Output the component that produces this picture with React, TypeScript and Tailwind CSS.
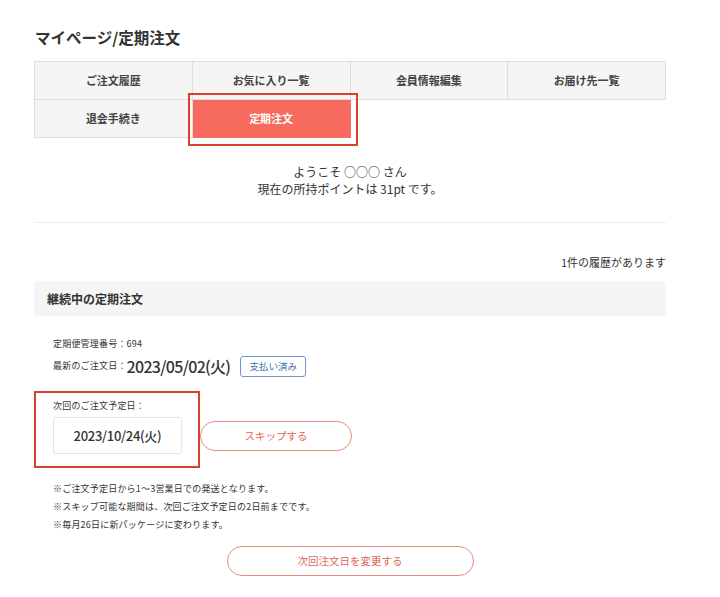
import * as React from 'react';

// Account navigation tabs, laid out 4 per row
const tabs = [
  { label: 'ご注文履歴' },
  { label: 'お気に入り一覧' },
  { label: '会員情報編集' },
  { label: 'お届け先一覧' },
  { label: '退会手続き' },
  { label: '定期注文', active: true },
];

const notes = [
  '※ご注文予定日から1〜3営業日での発送となります。',
  '※スキップ可能な期間は、次回ご注文予定日の2日前までです。',
  '※毎月26日に新パッケージに変わります。',
];

function NavTabs() {
  return (
    <div className="relative mt-[14px] grid grid-cols-4 border-l border-t border-[#dedede]">
      {tabs.map((tab) =>
        tab.active ? (
          <div
            key={tab.label}
            className="flex h-[38px] items-center justify-center border-b border-r border-[#f66b5d] bg-[#f66b5d] text-[11px] font-bold text-white"
          >
            {tab.label}
          </div>
        ) : (
          <div
            key={tab.label}
            className="flex h-[38px] items-center justify-center border-b border-r border-[#dedede] bg-[#f5f5f5] text-[11px] font-bold text-[#444]"
          >
            {tab.label}
          </div>
        )
      )}
      {/* highlight frame round the active tab */}
      <div className="pointer-events-none absolute left-[153px] top-[31px] h-[53px] w-[170px] border-2 border-[#d5432f]" />
    </div>
  );
}

export default function App() {
  return (
    <div className="h-[597px] w-[720px] overflow-hidden bg-white font-['Noto_Sans_CJK_JP',sans-serif] text-[#333]">
      <div className="ml-[34px] w-[632px] pt-[27px]">
        <h1 className="ml-px text-[15.5px] font-bold leading-[20px] text-[#333]">マイページ/定期注文</h1>

        <NavTabs />

        <div className="mt-[25px] text-center text-[12px] leading-[17px]">
          <p>ようこそ ○○○ さん</p>
          <p>現在の所持ポイントは 31pt です。</p>
        </div>

        <hr className="mt-[25px] border-t border-[#ececec]" />

        <p className="mt-[31px] text-right text-[11px] leading-[16px]">1件の履歴があります</p>

        <div className="mt-[11px] flex h-[35px] items-center rounded-sm bg-[#f5f5f5] pl-[13px]">
          <h2 className="text-[12px] font-bold">継続中の定期注文</h2>
        </div>

        <div className="pl-[19px]">
          <p className="mt-[21px] text-[9px] leading-[14px] tracking-[0.2px]">定期便管理番号：694</p>

          <div className="mt-[4px] flex items-center">
            <span className="text-[9px] tracking-[0.2px]">最新のご注文日：</span>
            <span className="text-[16px] font-medium leading-[22px] tracking-[-0.7px]">2023/05/02(火)</span>
            <span className="ml-[10px] flex h-[21px] w-[66px] items-center justify-center rounded-[3px] border border-[#6b98c8] text-[9.5px] text-[#3d74b0]">
              支払い済み
            </span>
          </div>

          <div className="relative mt-[14px] flex items-center">
            <div className="pt-[8px]">
              <p className="text-[9px] leading-[14px] tracking-[0.2px]">次回のご注文予定日：</p>
              <div className="mt-[4px] flex h-[37px] w-[129px] items-center justify-center rounded-[3px] border border-[#e6e6e6] bg-white text-[13px] font-medium tracking-[-0.3px] shadow-[0_0_2px_rgba(0,0,0,0.06)]">
                2023/10/24(火)
              </div>
            </div>
            <button className="ml-[18px] mt-[27px] flex h-[30px] w-[152px] items-center justify-center rounded-full border border-[#e98a82] text-[10.5px] text-[#e0665c]">
              スキップする
            </button>
            {/* highlight frame round the next order date */}
            <div className="pointer-events-none absolute left-[-19px] top-0 h-[77px] w-[166px] border-2 border-[#d5432f]" />
          </div>

          <div className="mt-[26px] text-[9px] leading-[18px] tracking-[0.2px]">
            {notes.map((n) => (
              <p key={n}>{n}</p>
            ))}
          </div>
        </div>

        <div className="mt-[12px] flex justify-center">
          <button className="flex h-[30px] w-[247px] items-center justify-center rounded-full border border-[#e98a82] text-[10.5px] text-[#e0665c]">
            次回注文日を変更する
          </button>
        </div>
      </div>
    </div>
  );
}
